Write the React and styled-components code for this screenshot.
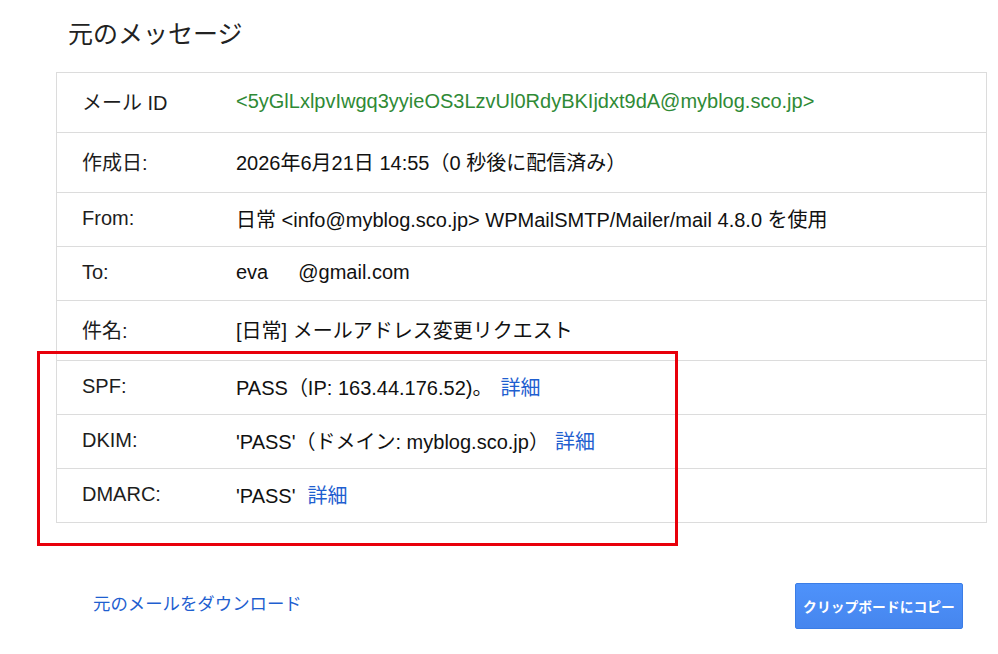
import React from 'react';
import styled, { createGlobalStyle } from 'styled-components';

const GlobalStyle = createGlobalStyle`
  html, body {
    margin: 0;
    padding: 0;
    background: #fff;
  }
  body {
    font-family: "Liberation Sans", Arial, "Noto Sans CJK JP", sans-serif;
    color: #1d1d1d;
  }
`;

const Page = styled.div`
  position: relative;
  width: 998px;
  height: 654px;
  padding: 0 11px 0 56px;
  box-sizing: border-box;
  overflow: hidden;
`;

const Title = styled.h1`
  margin: 0;
  padding: 14px 0 0 12px;
  height: 72px;
  box-sizing: border-box;
  font-size: 25px;
  font-weight: 400;
  color: #222;
`;

const Table = styled.div`
  border: 1px solid #dcdcdc;
  width: 931px;
  box-sizing: border-box;
`;

const Row = styled.div`
  display: grid;
  grid-template-columns: 179px 1fr;
  align-items: center;
  height: ${p => p.$h}px;
  padding-bottom: 2px;
  box-sizing: border-box;
  border-top: ${p => (p.$first ? 'none' : '1px solid #dcdcdc')};
  font-size: 20px;
`;

const Label = styled.div`
  padding-left: 25px;
  color: #1d1d1d;
`;

const Value = styled.div`
  color: ${p => (p.$green ? '#2f8a36' : '#111')};
  white-space: nowrap;
`;

const Detail = styled.a`
  color: #1f5fd0;
  text-decoration: none;
  margin-left: ${p => p.$gap}px;
`;

const Redacted = styled.span`
  display: inline-block;
  width: 30px;
`;

const Footer = styled.div`
  display: flex;
  align-items: center;
  justify-content: space-between;
  margin: 60px 0 0 37px;
  width: 870px;
`;

const DownloadLink = styled.a`
  color: #1f5fd0;
  font-size: 17.4px;
  text-decoration: none;
  margin-top: -8px;
`;

const CopyButton = styled.button`
  width: 168px;
  height: 46px;
  border: 1px solid #3b7de6;
  border-radius: 2px;
  background: linear-gradient(#4e92fb, #4686ee);
  color: #fff;
  font-family: "Liberation Sans", Arial, "Noto Sans CJK JP", sans-serif;
  font-weight: 700;
  font-size: 13.8px;
  padding: 0;
  cursor: pointer;
`;

const Highlight = styled.div`
  position: absolute;
  left: 37px;
  top: 351px;
  width: 641px;
  height: 195px;
  border: 3px solid #e8000b;
  box-sizing: border-box;
  pointer-events: none;
`;

const rows = [
  { label: 'メール ID', h: 59, value: '<5yGlLxlpvIwgq3yyieOS3LzvUl0RdyBKIjdxt9dA@myblog.sco.jp>', green: true },
  { label: '作成日:', h: 60, value: '2026年6月21日 14:55（0 秒後に配信済み）' },
  { label: 'From:', h: 54, value: '日常 <info@myblog.sco.jp> WPMailSMTP/Mailer/mail 4.8.0 を使用' },
  { label: 'To:', h: 54, to: true },
  { label: '件名:', h: 60, value: '[日常] メールアドレス変更リクエスト' },
  { label: 'SPF:', h: 54, value: 'PASS（IP: 163.44.176.52)。', detail: 8 },
  { label: 'DKIM:', h: 54, value: "'PASS'（ドメイン: myblog.sco.jp）", detail: 6 },
  { label: 'DMARC:', h: 54, value: "'PASS'", detail: 12 },
];

export default function App() {
  return (
    <Page>
      <GlobalStyle />
      <Title>元のメッセージ</Title>
      <Table>
        {rows.map((r, i) => (
          <Row key={r.label} $h={r.h} $first={i === 0}>
            <Label>{r.label}</Label>
            <Value $green={r.green}>
              {r.to ? (
                <>eva<Redacted />@gmail.com</>
              ) : (
                r.value
              )}
              {r.detail && <Detail href="#" $gap={r.detail}>詳細</Detail>}
            </Value>
          </Row>
        ))}
      </Table>
      <Footer>
        <DownloadLink href="#">元のメールをダウンロード</DownloadLink>
        <CopyButton>クリップボードにコピー</CopyButton>
      </Footer>
      <Highlight />
    </Page>
  );
}
